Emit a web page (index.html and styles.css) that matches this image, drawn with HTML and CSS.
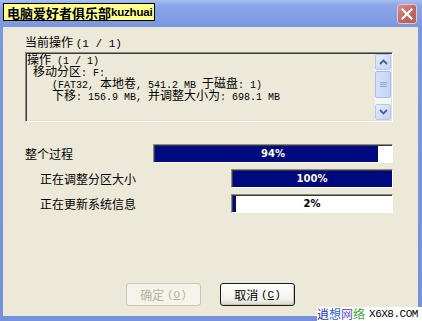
FILE: index.html
```html
<!DOCTYPE html>
<html>
<head>
<meta charset="utf-8">
<link rel="stylesheet" href="styles.css">
</head>
<body>
<div class="window">
  <div class="titlebar">
    <div class="title"><span class="tcjk">电脑爱好者俱乐部</span><span class="tlat">kuzhuai</span></div>
    <div class="close"><svg width="12" height="12" viewBox="0 0 12 12"><path d="M1.5 1.5 L10.5 10.5 M10.5 1.5 L1.5 10.5" stroke="#fff" stroke-width="2.2" stroke-linecap="square"/></svg></div>
  </div>
  <div class="client">
    <div class="label top">当前操作 <span class="m">(1 / 1)</span></div>
    <div class="textbox">
      <div class="lines">
        <div class="ln"><span class="c">操作</span> (1 / 1)</div>
        <div class="ln i1"><span class="c">移动分区</span>: F:</div>
        <div class="ln i2">(FAT32, <span class="c">本地卷</span>, 541.2 MB <span class="c">于磁盘</span>: 1)</div>
        <div class="ln i2"><span class="c">下移</span>: 156.9 MB, <span class="c">并调整大小为</span>: 698.1 MB</div>
      </div>
      <div class="scrollbar">
        <div class="sbtn"><svg width="9" height="6" viewBox="0 0 9 6"><path d="M1 5 L4.5 1.5 L8 5" fill="none" stroke="#4d6185" stroke-width="1.8"/></svg></div>
        <div class="track">
          <div class="thumb"><svg width="7" height="7" viewBox="0 0 7 7"><path d="M0 1.5H7M0 3.5H7M0 5.5H7" stroke="#8fa6e0" stroke-width="1"/></svg></div>
        </div>
        <div class="sbtn"><svg width="9" height="6" viewBox="0 0 9 6"><path d="M1 1 L4.5 4.5 L8 1" fill="none" stroke="#4d6185" stroke-width="1.8"/></svg></div>
      </div>
    </div>
    <div class="progress">
      <div class="prow">
        <div class="plabel">整个过程</div>
        <div class="bar wide"><div class="fill" style="width:94%"></div><span class="ptext light">94%</span></div>
      </div>
      <div class="prow">
        <div class="plabel sub">正在调整分区大小</div>
        <div class="bar"><div class="fill" style="width:100%"></div><span class="ptext light">100%</span></div>
      </div>
      <div class="prow">
        <div class="plabel sub">正在更新系统信息</div>
        <div class="bar"><div class="fill" style="width:2%"></div><span class="ptext">2%</span></div>
      </div>
    </div>
    <div class="buttons">
      <div class="btn disabled">确定 <span class="m">(<u>O</u>)</span></div>
      <div class="btn default">取消 <span class="m">(<u>C</u>)</span></div>
    </div>
  </div>
  <div class="wm"><span class="w1">逍</span><span class="w2">想</span><span class="w3">网</span><span class="w4">络</span><span class="wl">X6X8.COM</span></div>
</div>
</body>
</html>
```
FILE: styles.css
```css
html, body {
  margin: 0;
  padding: 0;
}
body {
  width: 422px;
  height: 321px;
  overflow: hidden;
  font-family: "Noto Sans CJK SC", sans-serif;
  font-size: 12px;
  color: #000;
}
.window {
  position: relative;
  width: 422px;
  height: 321px;
  display: flex;
  flex-direction: column;
  background: linear-gradient(to bottom, #a9bff2 0px, #8aa5e8 6px, #7b97e0 27px, #7591dc 100%);
  box-sizing: border-box;
}
.titlebar {
  height: 27px;
  flex: none;
  display: flex;
  align-items: flex-start;
  justify-content: space-between;
  padding: 3px 5px 0 3px;
  box-sizing: border-box;
}
.title {
  background: #ffff8c;
  border: 1px solid #000;
  height: 18px;
  box-sizing: border-box;
  padding: 0 2px 0 3px;
  display: flex;
  align-items: center;
  font-weight: bold;
  white-space: nowrap;
}
.tcjk {
  font-size: 13px;
  line-height: 15px;
}
.tlat {
  font-family: "Liberation Sans", sans-serif;
  font-size: 11.5px;
  line-height: 15px;
  letter-spacing: -0.2px;
}
.close {
  margin-top: 1px;
  width: 20px;
  height: 20px;
  box-sizing: border-box;
  border: 1px solid #e9c4c8;
  border-radius: 3px;
  background: linear-gradient(135deg, #d98d8a, #c0645f 60%, #b8605c);
  display: flex;
  align-items: center;
  justify-content: center;
}
.client {
  flex: 1;
  margin: 0 4px 5px 3px;
  background: #ece9d8;
  padding: 8px 25px 10px 22px;
  display: flex;
  flex-direction: column;
  box-sizing: border-box;
}
.label {
  line-height: 14px;
  height: 14px;
}
.m {
  font-family: "Liberation Mono", monospace;
  font-size: 11px;
}
.textbox {
  margin-top: 3px;
  height: 70px;
  box-sizing: border-box;
  border-style: solid;
  border-width: 1px;
  border-color: #8b8a85 #fff #fff #8b8a85;
  box-shadow: inset 1px 1px 0 #3a3a3a, inset -1px -1px 0 #e3e0d0;
  display: flex;
  background: #ece9d8;
}
.lines {
  flex: 1;
  padding: 1px 0 0 1px;
  font-family: "Liberation Mono", monospace;
  font-size: 10px;
  line-height: 12px;
}
.ln {
  height: 12px;
  line-height: 12px;
  white-space: pre;
  overflow: visible;
}
.c {
  font-family: "Noto Sans CJK SC", sans-serif;
  font-size: 12px;
  line-height: 10px;
}
.i1 { padding-left: 6px; }
.i2 { padding-left: 25px; }
.scrollbar {
  width: 16px;
  margin: 1px 1px 1px 0;
  background: #f6f5ef;
  display: flex;
  flex-direction: column;
}
.sbtn {
  height: 16px;
  box-sizing: border-box;
  border: 1px solid #b5c7f3;
  border-radius: 2px;
  background: linear-gradient(135deg, #e3ebfd, #c2d3fb);
  display: flex;
  align-items: center;
  justify-content: center;
}
.track {
  flex: 1;
  padding: 1px 0 6px;
  display: flex;
}
.thumb {
  flex: 1;
  box-sizing: border-box;
  border: 1px solid #a9bcec;
  border-radius: 2px;
  background: linear-gradient(to right, #d5e1fd, #c4d4fb);
  display: flex;
  align-items: center;
  justify-content: center;
}
.progress {
  margin-top: 22px;
  display: flex;
  flex-direction: column;
  gap: 6px;
}
.prow {
  display: flex;
  align-items: center;
  height: 19px;
}
.plabel {
  flex: 1;
  line-height: 14px;
}
.plabel.sub {
  padding-left: 15px;
}
.bar {
  position: relative;
  width: 162px;
  height: 19px;
  box-sizing: border-box;
  border-style: solid;
  border-width: 1px;
  border-color: #8b8a85 #fff #fff #8b8a85;
  box-shadow: inset 1px 1px 0 #3a3a3a;
  background: #fff;
  padding: 1px 0 0 1px;
  display: flex;
}
.bar.wide {
  width: 240px;
}
.fill {
  height: 100%;
  background: #000a80;
}
.ptext {
  position: absolute;
  left: 0;
  right: 0;
  top: 0;
  bottom: 0;
  display: flex;
  align-items: center;
  justify-content: center;
  font-family: "DejaVu Sans", sans-serif;
  font-weight: bold;
  font-size: 10px;
  color: #000;
}
.ptext.light {
  color: #fffbe0;
}
.buttons {
  margin-top: auto;
  display: flex;
  justify-content: center;
  gap: 19px;
  margin-left: -22px;
  margin-right: -25px;
}
.btn {
  width: 75px;
  height: 23px;
  box-sizing: border-box;
  border-radius: 3px;
  display: flex;
  align-items: center;
  justify-content: center;
  line-height: 14px;
  white-space: pre;
}
.btn.disabled {
  border: 1px solid #c9c7ba;
  background: #f5f4ea;
  color: #b5b2a3;
}
.btn.default {
  border: 1px solid #1a1a1a;
  background: linear-gradient(to bottom, #ffffff, #f3f2ec 70%, #dcd9cc);
  box-shadow: inset -1px -1px 0 #c8c5b7;
}
.wm {
  position: absolute;
  right: 0;
  bottom: 0;
  height: 14px;
  width: 105px;
  background: #fff;
  display: flex;
  align-items: center;
  font-size: 12px;
  line-height: 14px;
  white-space: nowrap;
}
.w1 { color: #1a2fc8; }
.w2 { color: #2d5ee6; }
.w3 { color: #5b57e0; }
.w4 { color: #3aa53a; }
.wl {
  margin-left: 4px;
  font-family: "Liberation Mono", monospace;
  font-size: 11px;
  color: #000;
  letter-spacing: -0.5px;
}
```
